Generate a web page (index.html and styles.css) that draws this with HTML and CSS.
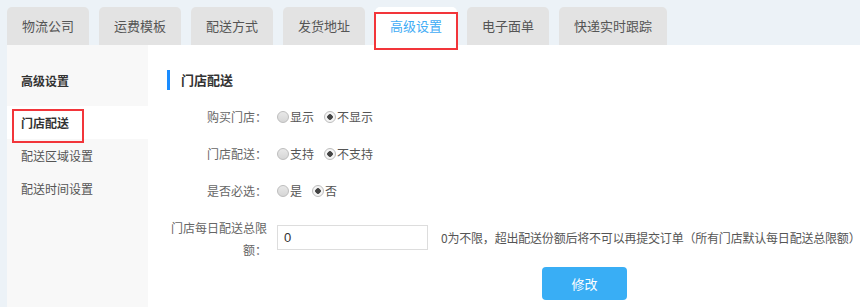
FILE: index.html
```html
<!DOCTYPE html>
<html lang="zh-CN">
<head>
    <meta charset="UTF-8">
    <meta name="viewport" content="width=device-width, initial-scale=1.0">
    <title>高级设置</title>
    <link rel="stylesheet" href="styles.css">
</head>
<body>
    <div class="page">
        <div class="tabs">
            <div class="tab">物流公司</div>
            <div class="tab">运费模板</div>
            <div class="tab">配送方式</div>
            <div class="tab">发货地址</div>
            <div class="tab active marked">高级设置</div>
            <div class="tab">电子面单</div>
            <div class="tab">快递实时跟踪</div>
        </div>

        <div class="content">
            <div class="sidebar">
                <div class="side-title">高级设置</div>
                <div class="side-item current marked">门店配送</div>
                <div class="side-item">配送区域设置</div>
                <div class="side-item">配送时间设置</div>
            </div>

            <div class="main">
                <h2 class="section-title">门店配送</h2>

                <div class="form-row">
                    <label class="form-label">购买门店：</label>
                    <div class="options">
                        <label class="radio"><input type="radio" name="buy">显示</label>
                        <label class="radio"><input type="radio" name="buy" checked>不显示</label>
                    </div>
                </div>

                <div class="form-row">
                    <label class="form-label">门店配送：</label>
                    <div class="options">
                        <label class="radio"><input type="radio" name="delivery">支持</label>
                        <label class="radio"><input type="radio" name="delivery" checked>不支持</label>
                    </div>
                </div>

                <div class="form-row">
                    <label class="form-label">是否必选：</label>
                    <div class="options">
                        <label class="radio"><input type="radio" name="required">是</label>
                        <label class="radio"><input type="radio" name="required" checked>否</label>
                    </div>
                </div>

                <div class="form-row limit-row">
                    <label class="form-label" for="limit">门店每日配送总限额：</label>
                    <input type="text" id="limit" class="text-input" value="0">
                    <span class="hint">0为不限，超出配送份额后将不可以再提交订单（所有门店默认每日配送总限额）</span>
                </div>

                <button class="btn-submit">修改</button>
            </div>
        </div>
    </div>
</body>
</html>
```

FILE: styles.css
```css
* {
    box-sizing: border-box;
}
html, body {
    margin: 0;
    height: 100%;
}
body {
    font-family: "Noto Sans CJK SC", "Liberation Sans", sans-serif;
    font-size: 12px;
    color: #555;
    background: #ecf2f7;
    overflow: hidden;
}
.page {
    padding: 7px 0 0 7px;
    height: 100%;
    display: flex;
    flex-direction: column;
}
.tabs {
    display: flex;
    gap: 10px;
    height: 38px;
}
.tab {
    position: relative;
    height: 38px;
    line-height: 38px;
    padding: 0 15px;
    font-size: 13px;
    color: #555;
    background: #e3e3e3;
    border-radius: 5px 5px 0 0;
}
.tab.active {
    background: #fff;
    color: #42acf5;
}
.marked::after {
    content: "";
    position: absolute;
    border: 2px solid #f2353a;
}
.tab.marked::after {
    left: -1px;
    top: 5px;
    width: 80px;
    height: 34px;
}
.content {
    flex: 1;
    display: flex;
    background: #fff;
}
.sidebar {
    flex-shrink: 0;
    width: 141px;
    background: #f8f8f8;
}
.side-title {
    padding: 26px 0 0 14px;
    height: 61px;
    line-height: 20px;
    font-size: 12px;
    font-weight: bold;
    color: #333;
}
.side-item {
    position: relative;
    height: 33px;
    line-height: 33px;
    padding-left: 14px;
    font-size: 12px;
    color: #555;
}
.side-item.current {
    background: #fff;
    font-weight: bold;
    color: #333;
}
.side-item.marked::after {
    left: 5px;
    top: 3px;
    width: 68px;
    height: 30px;
}
.main {
    flex: 1;
    min-width: 0;
    padding: 25px 0 0 19px;
}
.section-title {
    margin: 0 0 15px;
    height: 20px;
    line-height: 20px;
    padding-left: 11px;
    border-left: 3px solid #1a8cff;
    font-size: 13px;
    font-weight: bold;
    color: #333;
}
.form-row {
    display: flex;
    align-items: center;
    height: 24px;
    margin-bottom: 13px;
}
.form-label {
    flex-shrink: 0;
    width: 100px;
    margin-right: 10px;
    text-align: right;
    color: #666;
    line-height: 22px;
}
.options {
    display: flex;
    gap: 10px;
}
.radio {
    display: flex;
    align-items: center;
    color: #555;
    line-height: 20px;
}
.radio input {
    -webkit-appearance: none;
    appearance: none;
    width: 12px;
    height: 12px;
    margin: 0 1px 0 0;
    border: 1px solid #bdbdbd;
    border-radius: 50%;
    background: linear-gradient(#e8e8e8, #d6d6d6);
}
.radio input:checked {
    background: radial-gradient(circle, #444 0 2.5px, #f4f4f4 3px);
}
.limit-row {
    align-items: flex-start;
    height: auto;
    margin-top: 14px;
    margin-bottom: 6px;
}
.text-input {
    flex-shrink: 0;
    width: 151px;
    height: 25px;
    margin-top: 8px;
    padding: 0 6px;
    border: 1px solid #ddd;
    font-family: "Liberation Sans", sans-serif;
    font-size: 13px;
    color: #333;
    outline: none;
}
.hint {
    margin: 8px 0 0 13px;
    line-height: 25px;
    color: #555;
    white-space: nowrap;
    letter-spacing: -0.2px;
}
.btn-submit {
    margin-left: 375px;
    width: 85px;
    height: 33px;
    border: none;
    border-radius: 4px;
    background: #39aef5;
    color: #fff;
    font-family: "Noto Sans CJK SC", sans-serif;
    font-size: 13px;
    cursor: pointer;
}
```
